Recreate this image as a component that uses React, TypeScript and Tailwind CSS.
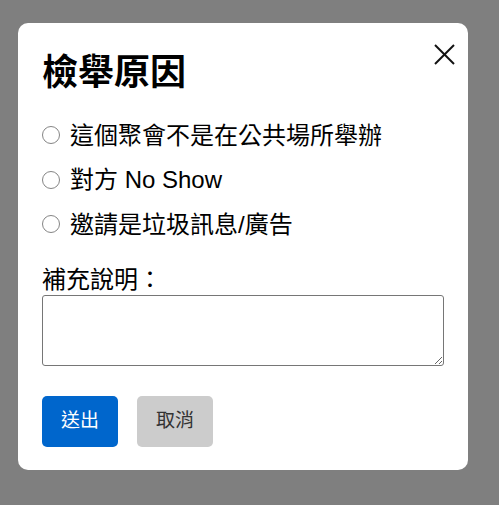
import React from 'react';

const reasons = [
  '這個聚會不是在公共場所舉辦',
  '對方 No Show',
  '邀請是垃圾訊息/廣告',
];

function ReportDialog() {
  return (
    <div className="relative w-[450px] rounded-[10px] bg-white px-[24px] pt-[28px] pb-[23px]">
      <button className="absolute top-[21px] right-[13px] w-[21px] h-[21px]" aria-label="close">
        <svg viewBox="0 0 21 21" className="block w-[21px] h-[21px]">
          <line x1="1" y1="1" x2="20" y2="20" stroke="#111" strokeWidth="2" />
          <line x1="20" y1="1" x2="1" y2="20" stroke="#111" strokeWidth="2" />
        </svg>
      </button>

      <h2 className="text-[36px] leading-[43px] font-bold text-black">檢舉原因</h2>

      <div className="mt-[19px] flex flex-col">
        {reasons.map((r) => (
          <label key={r} className="flex items-center h-[44.5px] text-[24px] leading-[29px] text-black">
            <input
              type="radio"
              name="reason"
              className="appearance-none shrink-0 w-[18px] h-[18px] m-0 mr-[10px] rounded-full border-[1.5px] border-[#858585] bg-white"
            />
            {r}
          </label>
        ))}
      </div>

      <label className="block mt-[18px] text-[24px] leading-[29px] text-black">補充說明：</label>
      <textarea className="block mt-[1px] w-full h-[71px] rounded-[3px] border border-[#767676] resize-y" />

      <div className="mt-[30px] flex gap-[19px]">
        <button className="w-[76px] h-[51px] rounded-[5px] bg-[#0066cc] text-white text-[19px]">送出</button>
        <button className="w-[76px] h-[51px] rounded-[5px] bg-[#cccccc] text-[#333] text-[19px]">取消</button>
      </div>
    </div>
  );
}

export default function App() {
  return (
    <div
      className="min-h-screen bg-[#7f7f7f] pl-[18px] pt-[23px]"
      style={{ fontFamily: '"Liberation Sans", "Noto Sans CJK TC", sans-serif' }}
    >
      <ReportDialog />
    </div>
  );
}
